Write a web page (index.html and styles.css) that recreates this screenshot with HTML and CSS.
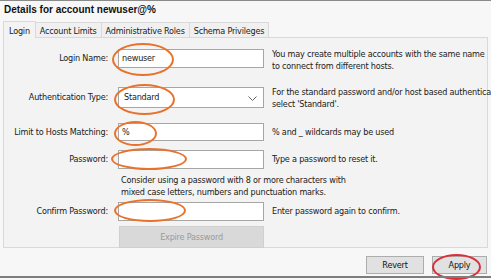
FILE: index.html
```html
<!DOCTYPE html>
<html lang="en">
<head>
    <meta charset="UTF-8">
    <title>Details for account newuser@%</title>
    <link rel="stylesheet" href="styles.css">
</head>
<body>
    <div class="window">
        <h1 class="title">Details for account newuser@%</h1>

        <div class="tabs">
            <div class="tab active">Login</div>
            <div class="tab">Account Limits</div>
            <div class="tab">Administrative Roles</div>
            <div class="tab">Schema Privileges</div>
        </div>

        <div class="panel">
            <div class="row row-login">
                <label class="label">Login Name:</label>
                <div class="field">newuser</div>
                <div class="help">You may create multiple accounts with the same name<br>to connect from different hosts.</div>
            </div>
            <div class="row row-auth">
                <label class="label">Authentication Type:</label>
                <div class="field select">Standard
                    <svg class="chevron" width="9" height="6" viewBox="0 0 9 6"><path d="M0.5 0.5 L4.5 4.5 L8.5 0.5" fill="none" stroke="#666" stroke-width="1"/></svg>
                </div>
                <div class="help">For the standard password and/or host based authentication,<br>select 'Standard'.</div>
            </div>
            <div class="row row-hosts">
                <label class="label">Limit to Hosts Matching:</label>
                <div class="field">%</div>
                <div class="help">% and _ wildcards may be used</div>
            </div>
            <div class="row row-pass">
                <label class="label">Password:</label>
                <div class="field"></div>
                <div class="help">Type a password to reset it.</div>
            </div>
            <div class="note">Consider using a password with 8 or more characters with<br>mixed case letters, numbers and punctuation marks.</div>
            <div class="row row-confirm">
                <label class="label">Confirm Password:</label>
                <div class="field"></div>
                <div class="help">Enter password again to confirm.</div>
            </div>
            <div class="row row-expire">
                <span class="label"></span>
                <button class="btn-expire" disabled>Expire Password</button>
            </div>
        </div>

        <div class="actions">
            <button class="btn">Revert</button>
            <button class="btn btn-apply">Apply</button>
        </div>

        <!-- annotation marks drawn over the form -->
        <span class="mark" style="left:112px;top:42px;width:58px;height:29px"></span>
        <span class="mark" style="left:114px;top:83px;width:57px;height:27px"></span>
        <span class="mark" style="left:114px;top:120px;width:39px;height:21px"></span>
        <span class="mark" style="left:111px;top:147px;width:72px;height:18px"></span>
        <span class="mark" style="left:114px;top:198px;width:68px;height:19px"></span>
        <span class="mark red" style="left:432px;top:253px;width:45px;height:22px"></span>
    </div>
</body>
</html>
```

FILE: styles.css
```css
body {
    margin: 0;
    font-family: "DejaVu Sans Condensed", "Liberation Sans", Arial, sans-serif;
    font-size: 9px;
    letter-spacing: -0.2px;
    color: #1a1a1a;
    background: #f7f7f7;
}
.window {
    position: relative;
    width: 491px;
    height: 280px;
    border-top: 1px solid #8a8a8a;
    box-sizing: border-box;
    white-space: nowrap;
    overflow: hidden;
}
.title {
    margin: 0;
    padding: 3px 0 0 4px;
    height: 16px;
    font-family: "Liberation Sans", Arial, sans-serif;
    font-size: 10px;
    font-weight: bold;
    letter-spacing: 0;
    line-height: 12px;
    color: #111;
}
.tabs {
    display: flex;
    align-items: flex-end;
    padding-left: 3px;
    height: 17px;
    position: relative;
    z-index: 1;
}
.tab {
    height: 15px;
    box-sizing: border-box;
    padding: 2px 4px 0;
    border: 1px solid #d9d9d9;
    border-bottom: none;
    border-left: none;
    background: #f0f0f0;
    line-height: 12px;
}
.tab.active {
    height: 17px;
    padding: 3px 5px 0 5px;
    border-left: 1px solid #d9d9d9;
    background: #f3f3f3;
    margin-bottom: -1px;
}
.panel {
    margin: 0 3px;
    height: 211px;
    border: 1px solid #d9d9d9;
    background: #f3f3f3;
    box-sizing: border-box;
    padding-top: 11px;
}
.row {
    display: flex;
    align-items: flex-start;
}
.label {
    width: 104px;
    text-align: right;
    margin-right: 10px;
    flex-shrink: 0;
    line-height: 19px;
}
.field {
    width: 146px;
    height: 19px;
    box-sizing: border-box;
    border: 1px solid #a6a6a6;
    background: #fff;
    padding: 0 0 0 3px;
    line-height: 17px;
    flex-shrink: 0;
}
.select {
    height: 21px;
    line-height: 19px;
    padding-left: 5px;
    position: relative;
}
.row-auth .label {
    line-height: 21px;
}
.chevron {
    position: absolute;
    right: 6px;
    top: 8px;
}
.help {
    margin-left: 8px;
    line-height: 12px;
    padding-top: 3px;
    height: 19px;
    box-sizing: border-box;
}
.row-login .help,
.row-auth .help {
    padding-top: 0;
    margin-top: -1px;
}
.row-auth {
    margin-top: 19px;
}
.row-hosts {
    margin-top: 15px;
}
.row-hosts .field {
    height: 18px;
    line-height: 16px;
}
.row-hosts .label {
    line-height: 18px;
}
.row-pass {
    margin-top: 8px;
}
.note {
    margin: 5px 0 0 117px;
    line-height: 12px;
}
.row-confirm {
    margin-top: 4px;
}
.row-expire {
    margin-top: 5px;
}
.btn-expire {
    width: 145px;
    height: 22px;
    margin-left: 1px;
    border: 1px solid #cfcfcf;
    background: #d9d9d9;
    color: #9a9a9a;
    font-family: inherit;
    font-size: 9px;
    letter-spacing: -0.2px;
}
.actions {
    display: flex;
    justify-content: flex-end;
    gap: 8px;
    padding: 8px 4px 0 0;
}
.btn {
    width: 58px;
    height: 18px;
    border: 1px solid #adadad;
    background: #e1e1e1;
    font-family: inherit;
    font-size: 9px;
    letter-spacing: -0.2px;
    color: #111;
    padding: 0;
}
.btn-apply {
    width: 55px;
}
.window::after {
    content: "";
    position: absolute;
    left: 0;
    right: 0;
    bottom: 2px;
    border-top: 2px solid #7d7d7d;
}
.mark {
    position: absolute;
    border: 2px solid #e8722c;
    border-radius: 50%;
}
.mark.red {
    border-color: #d8303a;
}
```
